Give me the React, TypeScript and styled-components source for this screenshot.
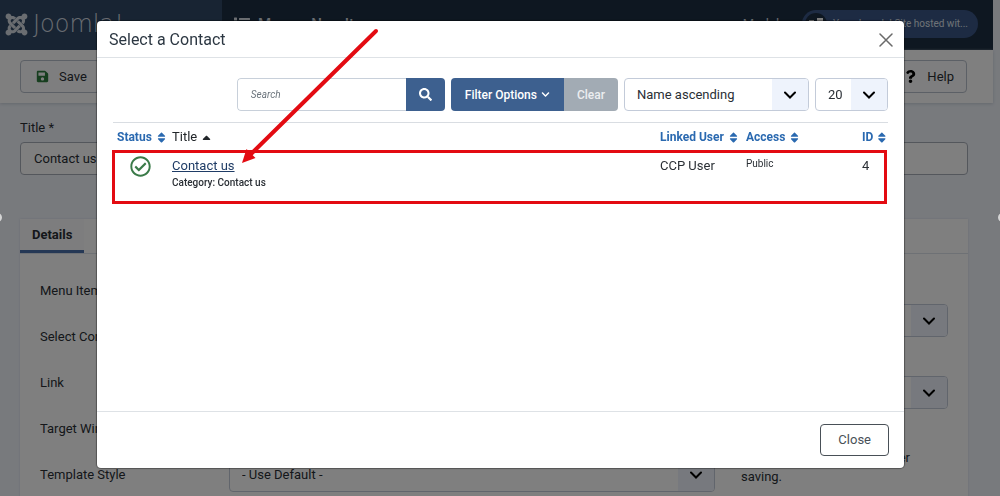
import React from "react";
import styled, { createGlobalStyle } from "styled-components";
import {
  FaCaretUp,
  FaChevronDown,
  FaJoomla,
  FaList,
  FaQuestion,
  FaRegCheckCircle,
  FaSave,
  FaSearch,
  FaSort,
} from "react-icons/fa";

const GlobalStyle = createGlobalStyle`
  * { box-sizing: border-box; }
  body {
    margin: 0;
    background: #f0f4fb;
    color: #2a2f35;
    font: 13px/20px Roboto, "Liberation Sans", sans-serif;
  }
  button, input, select { font: inherit; color: inherit; }
`;

const Page = styled.div`
  height: 100vh;
  overflow: hidden;
`;

const TopBar = styled.header`
  display: flex;
  height: 50px;
  margin-right: 7px;
  background: #1c2e42;
  color: #d8dde4;
`;

const Brand = styled.a`
  display: flex;
  align-items: center;
  gap: 4px;
  width: 222px;
  padding: 0 0 2px 4px;
  background: #304966;
  color: #d4dae2;
  text-decoration: none;
`;

const BrandName = styled.span`
  font: 200 24px/30px "DejaVu Sans", sans-serif;
`;

const TopBarMain = styled.div`
  display: flex;
  flex: 1;
  align-items: center;
  justify-content: space-between;
  padding: 0 15px 2px 12px;
`;

const PageTitle = styled.h1`
  display: flex;
  align-items: center;
  gap: 8px;
  margin: 0;
  font-size: 15px;
  font-weight: 500;
`;

const TopLinks = styled.div`
  display: flex;
  align-items: center;
  gap: 16px;
`;

const SitePill = styled.a`
  display: flex;
  align-items: center;
  gap: 6px;
  height: 28px;
  padding: 0 10px 0 3px;
  border-radius: 14px;
  background: #3a5687;
  color: #dfe4ec;
  font-size: 10px;
  text-decoration: none;
`;

const PillIcon = styled.span`
  display: grid;
  place-items: center;
  width: 22px;
  height: 22px;
  border-radius: 50%;
  background: #1c2e42;
`;

const Toolbar = styled.div`
  display: flex;
  justify-content: space-between;
  margin-right: 7px;
  padding: 10px 26px 10px 20px;
  background: #fff;
  box-shadow: 0 1px 3px #c9d0da;
`;

const ToolButton = styled.button`
  display: flex;
  align-items: center;
  gap: 10px;
  height: 33px;
  padding: 0 12px 0 15px;
  border: 1px solid #b9c0cc;
  border-radius: 4px;
  background: #fdfdfe;
`;

const EditForm = styled.form`
  padding: 15px 32px 0 20px;
`;

const FieldLabel = styled.label`
  display: block;
`;

const TitleInput = styled.input`
  width: 100%;
  height: 33px;
  margin-top: 4px;
  padding: 0 13px;
  border: 1px solid #a9afb9;
  border-radius: 4px;
  background: #fff;
`;

const Panel = styled.section`
  margin-top: 44px;
  background: #fff;
  box-shadow: 0 0 2px #d4dae6;
`;

const TabList = styled.div`
  display: flex;
  border-bottom: 1px solid #dde2ea;
`;

const Tab = styled.button`
  height: 34px;
  padding: 0 12px;
  border: 0;
  border-bottom: 3px solid #4b70ab;
  background: #fafbfc;
  font-weight: 700;
`;

const PanelBody = styled.div`
  display: grid;
  grid-template-columns: minmax(0, 1fr) 207px;
  gap: 26px;
  padding: 14px 20px 20px;
`;

const FieldRow = styled.div`
  display: grid;
  grid-template-columns: 189px minmax(0, 1fr);
  align-items: center;
  min-height: 46px;
`;

const SideColumn = styled.div`
  display: flex;
  flex-direction: column;
  gap: 39px;
  padding-top: 36px;
`;

const SideHelp = styled.p`
  margin: 0;
  line-height: 19px;
`;

const RightAligned = styled.span`
  display: block;
  padding-right: 38px;
  text-align: right;
`;

const SelectFrame = styled.span<{ $width?: string }>`
  display: grid;
  grid-template-columns: minmax(0, 1fr) 36px;
  width: ${(p) => p.$width ?? "100%"};
  height: 33px;
  overflow: hidden;
  border: 1px solid #c3cbd9;
  border-radius: 4px;
  background: #fff;
`;

const SelectBox = styled.select`
  grid-area: 1 / 1 / 2 / 3;
  width: 100%;
  padding: 0 38px 0 12px;
  border: 0;
  background: transparent;
  appearance: none;
`;

const SelectArrow = styled.span`
  display: grid;
  grid-area: 1 / 2;
  place-items: center;
  background: #eef3fc;
  color: #000;
  pointer-events: none;
`;

const Backdrop = styled.div`
  position: fixed;
  inset: 0;
  display: flex;
  padding: 21px 96px 28px 97px;
  background: rgba(0, 0, 0, 0.5);
`;

const Modal = styled.div`
  display: flex;
  flex: 1;
  flex-direction: column;
  min-width: 0;
  border-radius: 4px;
  background: #fff;
  box-shadow: 0 0 1px 1px rgba(0, 0, 0, 0.35);
`;

const ModalHeader = styled.div`
  display: flex;
  align-items: center;
  justify-content: space-between;
  height: 37px;
  padding: 1px 11px 0 12px;
  border-bottom: 1px solid #dee2e6;
`;

const ModalTitle = styled.h2`
  margin: 0;
  color: #2c3742;
  font-size: 16px;
  font-weight: 400;
`;

const CloseIconButton = styled.button`
  display: flex;
  padding: 0;
  border: 0;
  background: none;
  color: #6a6a6a;
`;

const ModalBody = styled.div`
  position: relative;
  flex: 1;
  padding: 20px 16px;
`;

const ModalFooter = styled.div`
  display: flex;
  justify-content: flex-end;
  padding: 12px 15px;
  border-top: 1px solid #dee2e6;
`;

const CloseButton = styled.button`
  height: 32px;
  padding: 0 17px;
  border: 1px solid #495057;
  border-radius: 4px;
  background: #fff;
  color: #495057;
`;

const Filters = styled.div`
  display: flex;
  justify-content: flex-end;
  gap: 6px;
`;

const Group = styled.div`
  display: flex;
  overflow: hidden;
  border-radius: 4px;
`;

const SearchInput = styled.input`
  width: 169px;
  height: 33px;
  padding: 0 13px;
  border: 1px solid #c8d0da;
  border-right: 0;
  border-radius: 4px 0 0 4px;
  font-size: 10px;
  &::placeholder { color: #6c757d; font-style: italic; opacity: 1; }
`;

const FilterButton = styled.button<{ $muted?: boolean; $icon?: boolean }>`
  display: flex;
  align-items: center;
  gap: 4px;
  height: 33px;
  padding: 0 ${(p) => (p.$icon ? "13px" : "14px")};
  border: 0;
  background: ${(p) => (p.$muted ? "#a2abb4" : "#3d608f")};
  color: ${(p) => (p.$muted ? "#eceef0" : "#fff")};
  font-size: 12px;
  font-weight: 500;
`;

const TableArea = styled.div`
  position: relative;
  margin-top: 11px;
`;

const ContactTable = styled.table`
  width: 100%;
  border-top: 1px solid #d9dde2;
  border-collapse: collapse;
  table-layout: fixed;
  text-align: left;
`;

const HeadCell = styled.th<{ $width?: string }>`
  width: ${(p) => p.$width ?? "auto"};
  padding: 4px 0 4px 4px;
  font-weight: 400;
  white-space: nowrap;
`;

const SortLink = styled.a<{ $active?: boolean }>`
  display: flex;
  align-items: center;
  gap: 3px;
  color: ${(p) => (p.$active ? "#22262a" : "#2a69b0")};
  font-size: ${(p) => (p.$active ? "13px" : "12px")};
  font-weight: ${(p) => (p.$active ? 400 : 700)};
  text-decoration: none;
`;

const Cell = styled.td<{ $small?: boolean }>`
  padding: 5px 0 4px 4px;
  font-size: ${(p) => (p.$small ? "10px" : "13px")};
  line-height: ${(p) => (p.$small ? "16px" : "20px")};
  vertical-align: top;
`;

const StatusMark = styled.span`
  display: flex;
  justify-content: center;
  padding-right: 4px;
  color: #3a7a48;
  font-size: 21px;
`;

const ContactLink = styled.a`
  color: #1f3c66;
`;

const Category = styled.div`
  font-size: 10px;
  font-weight: 500;
  line-height: 14px;
`;

const Highlight = styled.div`
  position: absolute;
  inset: 28px 1px auto -1px;
  height: 54px;
  border: 3px solid #e30b12;
  pointer-events: none;
`;

const Pointer = styled.svg`
  position: absolute;
  top: -30px;
  left: 140px;
  pointer-events: none;
`;

const Handle = styled.span<{ $side: "left" | "right" }>`
  position: fixed;
  top: 213px;
  ${(p) => p.$side}: -7px;
  width: 9px;
  height: 9px;
  border: 2px solid #d5d5d5;
  border-radius: 50%;
  background: #555;
`;

type SelectProps = { label: string; value: string; width?: string };

function Select({ label, value, width }: SelectProps) {
  return (
    <SelectFrame $width={width}>
      <SelectBox aria-label={label} defaultValue={value}>
        <option>{value}</option>
      </SelectBox>
      <SelectArrow>
        <svg width="12" height="8" viewBox="0 0 12 8" fill="none" stroke="currentColor" strokeWidth="2" strokeLinecap="round">
          <path d="M1 1.500 6 6.500l5-5" />
        </svg>
      </SelectArrow>
    </SelectFrame>
  );
}

function SortHeading({ text, width }: { text: string; width: string }) {
  return (
    <HeadCell $width={width}>
      <SortLink href="#">
        {text} <FaSort size={13} />
      </SortLink>
    </HeadCell>
  );
}

const fields = ["Menu Item Type *", "Select Contact *", "Link", "Target Window"];

export default function App() {
  return (
    <>
      <GlobalStyle />
      <Page>
        <TopBar>
          <Brand href="#">
            <FaJoomla size={25} />
            <BrandName>Joomla!</BrandName>
          </Brand>
          <TopBarMain>
            <PageTitle>
              <FaList size={16} /> Menus: New Item
            </PageTitle>
            <TopLinks>
              <span>Module</span>
              <SitePill href="#">
                <PillIcon>
                  <svg width="14" height="12" viewBox="0 0 14 12" fill="#fff">
                    <path d="M0 2h5v4H0zM8 0h6v7H8zM3 8h6v4H3z" />
                  </svg>
                </PillIcon>
                Your Joomla! Site hosted wit...
              </SitePill>
            </TopLinks>
          </TopBarMain>
        </TopBar>
        <Toolbar>
          <ToolButton type="button">
            <FaSave size={13} color="#2f7d3f" /> Save
          </ToolButton>
          <ToolButton type="button">
            <FaQuestion size={13} color="#000" /> Help
          </ToolButton>
        </Toolbar>
        <EditForm>
          <FieldLabel htmlFor="title">Title *</FieldLabel>
          <TitleInput id="title" defaultValue="Contact us" />
          <Panel>
            <TabList>
              <Tab type="button">Details</Tab>
            </TabList>
            <PanelBody>
              <div>
                {fields.map((field) => (
                  <FieldRow key={field}>
                    <span>{field}</span>
                  </FieldRow>
                ))}
                <FieldRow>
                  <span>Template Style</span>
                  <Select label="Template Style" value="- Use Default -" />
                </FieldRow>
              </div>
              <SideColumn>
                <Select label="Menu" value="Main Menu" />
                <Select label="Parent Item" value="Menu Item Root" />
                <SideHelp>
                  <RightAligned>after</RightAligned>
                  saving.
                </SideHelp>
              </SideColumn>
            </PanelBody>
          </Panel>
        </EditForm>
      </Page>

      <Backdrop>
        <Modal role="dialog" aria-labelledby="modal-title">
          <ModalHeader>
            <ModalTitle id="modal-title">Select a Contact</ModalTitle>
            <CloseIconButton type="button" aria-label="Close dialog">
              <svg width="14" height="14" viewBox="0 0 14 14" stroke="currentColor" strokeWidth="1.500" strokeLinecap="round">
                <path d="M1 1l12 12M13 1L1 13" />
              </svg>
            </CloseIconButton>
          </ModalHeader>
          <ModalBody>
            <Filters>
              <Group>
                <SearchInput type="text" placeholder="Search" aria-label="Search" />
                <FilterButton type="button" aria-label="Submit search" $icon>
                  <FaSearch size={13} />
                </FilterButton>
              </Group>
              <Group>
                <FilterButton type="button">
                  Filter Options <FaChevronDown size={9} />
                </FilterButton>
                <FilterButton type="button" $muted $icon>
                  Clear
                </FilterButton>
              </Group>
              <Select label="Sort by" value="Name ascending" width="185px" />
              <Select label="Items per page" value="20" width="73px" />
            </Filters>
            <TableArea>
              <ContactTable>
                <thead>
                  <tr>
                    <SortHeading text="Status" width="55px" />
                    <HeadCell>
                      <SortLink href="#" $active>
                        Title <FaCaretUp size={13} />
                      </SortLink>
                    </HeadCell>
                    <SortHeading text="Linked User" width="86px" />
                    <SortHeading text="Access" width="116px" />
                    <SortHeading text="ID" width="30px" />
                  </tr>
                </thead>
                <tbody>
                  <tr>
                    <Cell>
                      <StatusMark>
                        <FaRegCheckCircle />
                      </StatusMark>
                    </Cell>
                    <Cell>
                      <ContactLink href="#">Contact us</ContactLink>
                      <Category>Category: Contact us</Category>
                    </Cell>
                    <Cell>CCP User</Cell>
                    <Cell $small>Public</Cell>
                    <Cell>4</Cell>
                  </tr>
                </tbody>
              </ContactTable>
              <Highlight />
            </TableArea>
            <Pointer width="144" height="140" viewBox="237 28 144 140">
              <path d="M376 31 250 155" stroke="#e30b12" strokeWidth="4" strokeLinecap="round" />
              <path d="M242 163l4.500-14 9 9z" fill="#e30b12" />
            </Pointer>
          </ModalBody>
          <ModalFooter>
            <CloseButton type="button">Close</CloseButton>
          </ModalFooter>
        </Modal>
      </Backdrop>
      <Handle $side="left" />
      <Handle $side="right" />
    </>
  );
}
